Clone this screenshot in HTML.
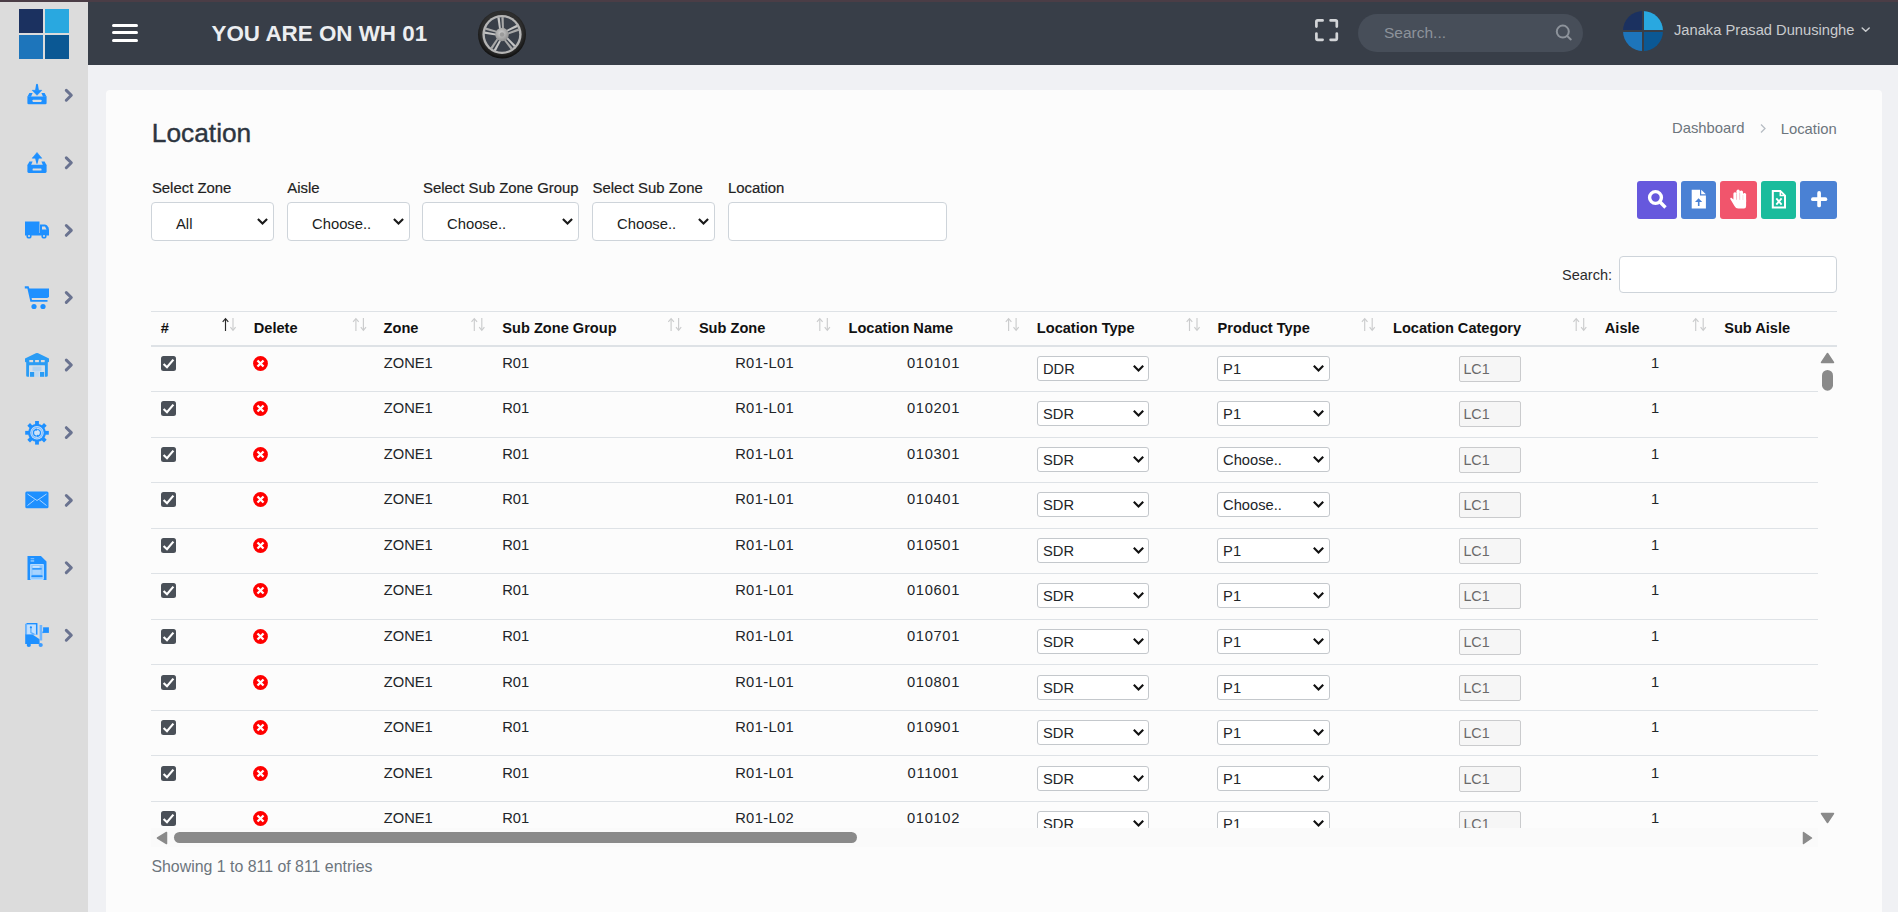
<!DOCTYPE html><html><head><meta charset="utf-8"><style>
html,body{margin:0;padding:0;}
body{width:1898px;height:912px;overflow:hidden;position:relative;background:#f0f1f4;font-family:'Liberation Sans',sans-serif;}
.t{position:absolute;white-space:nowrap;}
.s{-webkit-text-stroke-width:0.2px;}
.b{position:absolute;}
</style></head><body>
<div class="b" style="left:0px;top:0px;width:88px;height:912px;background:#dcdcdc;"></div>
<div class="b" style="left:88px;top:0px;width:1810px;height:65px;background:#383e48;"></div>
<div class="b" style="left:0px;top:0px;width:1898px;height:2px;background:#4b3d46;"></div>
<div class="b" style="left:19px;top:9px;width:24px;height:24px;background:#1b3160;"></div>
<div class="b" style="left:45px;top:9px;width:24px;height:24px;background:#29a8e0;"></div>
<div class="b" style="left:19px;top:35px;width:24px;height:24px;background:#1d75bb;"></div>
<div class="b" style="left:45px;top:35px;width:24px;height:24px;background:#0b5894;"></div>
<div class="b" style="left:112px;top:24px;width:26px;height:3px;background:#fff;border-radius:2px;"></div>
<div class="b" style="left:112px;top:31px;width:26px;height:3px;background:#fff;border-radius:2px;"></div>
<div class="b" style="left:112px;top:39px;width:26px;height:3px;background:#fff;border-radius:2px;"></div>
<div class="t" style="left:211.50px;top:23.14px;font-size:22.4px;line-height:22.4px;color:#eceef1;font-weight:700;-webkit-text-stroke-width:0;">YOU ARE ON WH 01</div>
<svg class="b" style="left:477px;top:10px" width="50" height="50" viewBox="0 0 50 50"><defs><radialGradient id="tg" cx="50%" cy="45%" r="55%"><stop offset="78%" stop-color="#2e2e2e"/><stop offset="100%" stop-color="#0e0e0e"/></radialGradient>
<radialGradient id="hg" cx="45%" cy="40%" r="60%"><stop offset="0%" stop-color="#cfcfcf"/><stop offset="100%" stop-color="#8e8e8e"/></radialGradient></defs>
<circle cx="25" cy="24.5" r="24" fill="url(#tg)"/><circle cx="25" cy="24.5" r="19.6" fill="#b5b5b5"/><circle cx="25" cy="24.5" r="17.2" fill="#393f49"/>
<g transform="rotate(-5 25 24.5)"><path d="M22.6 19 L21.8 7.2 H24.2 L24.4 19 Z" fill="#c4c4c4"/><path d="M27.4 19 L28.2 7.2 H25.8 L25.6 19 Z" fill="#a8a8a8"/></g><g transform="rotate(67 25 24.5)"><path d="M22.6 19 L21.8 7.2 H24.2 L24.4 19 Z" fill="#c4c4c4"/><path d="M27.4 19 L28.2 7.2 H25.8 L25.6 19 Z" fill="#a8a8a8"/></g><g transform="rotate(139 25 24.5)"><path d="M22.6 19 L21.8 7.2 H24.2 L24.4 19 Z" fill="#c4c4c4"/><path d="M27.4 19 L28.2 7.2 H25.8 L25.6 19 Z" fill="#a8a8a8"/></g><g transform="rotate(211 25 24.5)"><path d="M22.6 19 L21.8 7.2 H24.2 L24.4 19 Z" fill="#c4c4c4"/><path d="M27.4 19 L28.2 7.2 H25.8 L25.6 19 Z" fill="#a8a8a8"/></g><g transform="rotate(283 25 24.5)"><path d="M22.6 19 L21.8 7.2 H24.2 L24.4 19 Z" fill="#c4c4c4"/><path d="M27.4 19 L28.2 7.2 H25.8 L25.6 19 Z" fill="#a8a8a8"/></g><circle cx="25" cy="24.5" r="6.8" fill="url(#hg)"/><circle cx="25" cy="24.5" r="2.2" fill="#9a9a9a"/></svg>
<svg class="b" style="left:1314px;top:18px" width="26" height="26" viewBox="0 0 26 26"><g fill="none" stroke="#d3d5d8" stroke-width="2.7" stroke-linecap="round" stroke-linejoin="round">
<path d="M2.4 8.6 V3.6 Q2.4 2.4 3.6 2.4 H8.6"/><path d="M16.6 2.4 H21.6 Q22.8 2.4 22.8 3.6 V8.6"/><path d="M22.8 15.6 V20.6 Q22.8 21.8 21.6 21.8 H16.6"/><path d="M8.6 21.8 H3.6 Q2.4 21.8 2.4 20.6 V15.6"/></g></svg>
<div class="b" style="left:1358px;top:14px;width:225px;height:38px;background:#474e59;border-radius:19px;"></div>
<div class="t" style="left:1384.00px;top:25.08px;font-size:15.5px;line-height:15.5px;color:#8d939b;font-weight:400;">Search...</div>
<svg class="b" style="left:1553px;top:22px" width="22" height="22" viewBox="0 0 22 22"><g fill="none" stroke="#8d939b" stroke-width="2" stroke-linecap="round"><circle cx="9.8" cy="9.6" r="6"/><line x1="14.2" y1="14" x2="17.8" y2="17.4"/></g></svg>
<svg class="b" style="left:1623px;top:11px" width="40" height="40" viewBox="0 0 40 40"><defs><clipPath id="av"><circle cx="20" cy="20" r="20"/></clipPath></defs>
<g clip-path="url(#av)"><rect x="0" y="0" width="20" height="20" fill="#1b3160"/><rect x="20" y="0" width="20" height="20" fill="#29a8e0"/>
<rect x="0" y="20" width="20" height="20" fill="#1d75bb"/><rect x="20" y="20" width="20" height="20" fill="#0b5894"/>
<rect x="19" y="0" width="2" height="40" fill="#383e48"/><rect x="0" y="19" width="40" height="2" fill="#383e48"/></g></svg>
<div class="t" style="left:1674.00px;top:23.16px;font-size:14.7px;line-height:14.7px;color:#c9cbce;font-weight:400;">Janaka Prasad Dunusinghe</div>
<svg class="b" style="left:1860px;top:26px" width="11" height="8" viewBox="0 0 11 8"><path d="M2.2 2.0 L5.7 5.3 L9.2 2.0" fill="none" stroke="#c9cbce" stroke-width="1.5" stroke-linecap="round" stroke-linejoin="round"/></svg>
<div class="b" style="left:106px;top:90px;width:1776px;height:840px;background:#fcfcfc;border-radius:4px;"></div>
<div class="t" style="left:151.80px;top:120.04px;font-size:26.3px;line-height:26.3px;color:#2d3540;font-weight:400;-webkit-text-stroke:0.4px #2d3540;">Location</div>
<div class="t" style="left:1672.00px;top:121.37px;font-size:14.8px;line-height:14.8px;color:#6c757d;font-weight:400;">Dashboard</div>
<svg class="b" style="left:1758px;top:122px" width="10" height="12" viewBox="0 0 10 12"><path d="M3 2.5 L7 6.5 L3 10.5" fill="none" stroke="#b6bcc3" stroke-width="1.3"/></svg>
<div class="t" style="left:1780.70px;top:121.77px;font-size:14.8px;line-height:14.8px;color:#6c757d;font-weight:400;">Location</div>
<div class="t" style="left:151.90px;top:180.59px;font-size:14.9px;line-height:14.9px;color:#1f1f1f;font-weight:400;-webkit-text-stroke-width:0.2px;">Select Zone</div>
<div class="t" style="left:287.30px;top:180.59px;font-size:14.9px;line-height:14.9px;color:#1f1f1f;font-weight:400;-webkit-text-stroke-width:0.2px;">Aisle</div>
<div class="t" style="left:423.00px;top:180.59px;font-size:14.9px;line-height:14.9px;color:#1f1f1f;font-weight:400;-webkit-text-stroke-width:0.2px;">Select Sub Zone Group</div>
<div class="t" style="left:592.60px;top:180.59px;font-size:14.9px;line-height:14.9px;color:#1f1f1f;font-weight:400;-webkit-text-stroke-width:0.2px;">Select Sub Zone</div>
<div class="t" style="left:728.00px;top:180.59px;font-size:14.9px;line-height:14.9px;color:#1f1f1f;font-weight:400;-webkit-text-stroke-width:0.2px;">Location</div>
<div class="b" style="left:151px;top:202px;width:123px;height:39px;box-sizing:border-box;border:1px solid #ced4da;border-radius:4px;background:#fff;"></div>
<div class="t" style="left:176.00px;top:217.07px;font-size:14.8px;line-height:14.8px;color:#1a1d21;font-weight:400;">All</div>
<svg class="b" style="left:255.89999999999998px;top:217.3px" width="13" height="9" viewBox="0 0 13 9"><path d="M1.9 2.0 L6.5 6.6 L11.1 2.0" fill="none" stroke="#1a1a1a" stroke-width="2.1" stroke-linecap="butt"/></svg>
<div class="b" style="left:287px;top:202px;width:123px;height:39px;box-sizing:border-box;border:1px solid #ced4da;border-radius:4px;background:#fff;"></div>
<div class="t" style="left:312.00px;top:217.07px;font-size:14.8px;line-height:14.8px;color:#1a1d21;font-weight:400;">Choose..</div>
<svg class="b" style="left:391.9px;top:217.3px" width="13" height="9" viewBox="0 0 13 9"><path d="M1.9 2.0 L6.5 6.6 L11.1 2.0" fill="none" stroke="#1a1a1a" stroke-width="2.1" stroke-linecap="butt"/></svg>
<div class="b" style="left:422px;top:202px;width:157px;height:39px;box-sizing:border-box;border:1px solid #ced4da;border-radius:4px;background:#fff;"></div>
<div class="t" style="left:447.00px;top:217.07px;font-size:14.8px;line-height:14.8px;color:#1a1d21;font-weight:400;">Choose..</div>
<svg class="b" style="left:560.9px;top:217.3px" width="13" height="9" viewBox="0 0 13 9"><path d="M1.9 2.0 L6.5 6.6 L11.1 2.0" fill="none" stroke="#1a1a1a" stroke-width="2.1" stroke-linecap="butt"/></svg>
<div class="b" style="left:592px;top:202px;width:123px;height:39px;box-sizing:border-box;border:1px solid #ced4da;border-radius:4px;background:#fff;"></div>
<div class="t" style="left:617.00px;top:217.07px;font-size:14.8px;line-height:14.8px;color:#1a1d21;font-weight:400;">Choose..</div>
<svg class="b" style="left:696.9px;top:217.3px" width="13" height="9" viewBox="0 0 13 9"><path d="M1.9 2.0 L6.5 6.6 L11.1 2.0" fill="none" stroke="#1a1a1a" stroke-width="2.1" stroke-linecap="butt"/></svg>
<div class="b" style="left:728px;top:202px;width:219px;height:39px;box-sizing:border-box;border:1px solid #ced4da;border-radius:4px;background:#fff;"></div>
<div class="b" style="left:1637px;top:181px;width:40px;height:38px;background:#6658dd;border-radius:3px;"></div>
<div class="b" style="left:1681px;top:181px;width:35px;height:38px;background:#4a81d4;border-radius:3px;"></div>
<div class="b" style="left:1720px;top:181px;width:37px;height:38px;background:#f1556c;border-radius:3px;"></div>
<div class="b" style="left:1761px;top:181px;width:35px;height:38px;background:#1abc9c;border-radius:3px;"></div>
<div class="b" style="left:1800px;top:181px;width:37px;height:38px;background:#4a81d4;border-radius:3px;"></div>
<svg class="b" style="left:1646px;top:188px" width="22" height="22" viewBox="0 0 22 22"><g fill="none" stroke="#fff" stroke-width="3.4" stroke-linecap="butt"><circle cx="9.5" cy="9.5" r="5.9"/><line x1="13.8" y1="13.8" x2="19.5" y2="19.5"/></g></svg>
<svg class="b" style="left:1690px;top:188px" width="18" height="22" viewBox="0 0 18 22"><path d="M1.7 1.8 H10 V7.5 H15.9 V20.4 H1.7 Z" fill="#fff"/><path d="M11.2 1.8 L15.9 6.3 H11.2 Z" fill="#fff"/>
<path d="M8.6 10.3 L12.2 14 H5 Z" fill="#4a81d4"/><rect x="7.9" y="13.5" width="1.6" height="4.5" fill="#4a81d4"/></svg>
<svg class="b" style="left:1729px;top:188px" width="20" height="22" viewBox="0 0 20 22"><g fill="#fff"><rect x="4.4" y="4.2" width="3.2" height="11" rx="1.5"/><rect x="7.5" y="1.6" width="3.3" height="13" rx="1.6"/>
<rect x="10.7" y="2.6" width="3.3" height="12" rx="1.6"/><rect x="13.9" y="5" width="3.2" height="10" rx="1.5"/>
<path d="M4.4 11.5 L2.4 9.7 Q1.0 9.4 1.3 11.1 L5.3 17.8 Q6.6 20.6 9.2 20.6 H15 Q17.1 20.6 17.1 18 V11.5 Z"/></g>
<g stroke="#f1556c" stroke-width="0.35" opacity="0.6"><line x1="7.55" y1="6" x2="7.55" y2="12"/><line x1="10.75" y1="5" x2="10.75" y2="12"/><line x1="13.95" y1="7" x2="13.95" y2="12"/></g></svg>
<svg class="b" style="left:1770px;top:188px" width="18" height="22" viewBox="0 0 18 22"><path d="M2.8 2.9 H10.3 L15.0 7.6 V19.5 H2.8 Z" fill="none" stroke="#fff" stroke-width="2"/><path d="M10.3 2.9 V7.6 H15" fill="none" stroke="#fff" stroke-width="1.5"/>
<path d="M6.3 10.4 L11.6 16.6 M11.6 10.4 L6.3 16.6" stroke="#fff" stroke-width="1.9"/></svg>
<svg class="b" style="left:1809px;top:189px" width="20" height="20" viewBox="0 0 20 20"><g stroke="#fff" stroke-width="3.7" stroke-linecap="round"><line x1="10.1" y1="3.9" x2="10.1" y2="16.4"/><line x1="3.9" y1="10.15" x2="16.4" y2="10.15"/></g></svg>
<div class="t" style="left:1562.00px;top:268.03px;font-size:14.5px;line-height:14.5px;color:#2b2b2b;font-weight:400;">Search:</div>
<div class="b" style="left:1619px;top:256px;width:218px;height:37px;box-sizing:border-box;border:1px solid #ced4da;border-radius:4px;background:#fff;"></div>
<div class="b" style="left:151px;top:311px;width:1686px;height:1px;background:#dee2e6;"></div>
<div class="b" style="left:151px;top:345px;width:1686px;height:2px;background:#dee2e6;"></div>
<div class="t" style="left:160.80px;top:320.64px;font-size:14.6px;line-height:14.6px;color:#111;font-weight:700;-webkit-text-stroke-width:0;">#</div>
<svg class="b" style="left:221px;top:316px" width="16" height="17" viewBox="0 0 16 17"><g fill="none" stroke-width="1.15" stroke-linecap="butt">
<g stroke="#2a2a2a"><line x1="4.499999999999995" y1="3" x2="4.499999999999995" y2="15"/><path d="M1.6999999999999944 5.9 L4.499999999999995 2.6 L7.2999999999999945 5.9"/></g>
<g stroke="#cbcccd"><line x1="11.999999999999995" y1="2" x2="11.999999999999995" y2="14"/><path d="M9.399999999999995 11.1 L11.999999999999995 14.4 L14.599999999999994 11.1"/></g></g></svg>
<div class="t" style="left:253.80px;top:320.64px;font-size:14.6px;line-height:14.6px;color:#111;font-weight:700;-webkit-text-stroke-width:0;">Delete</div>
<svg class="b" style="left:352px;top:316px" width="16" height="17" viewBox="0 0 16 17"><g fill="none" stroke-width="1.15" stroke-linecap="butt">
<g stroke="#cbcccd"><line x1="3.9" y1="3" x2="3.9" y2="15"/><path d="M1.1 5.9 L3.9 2.6 L6.7 5.9"/></g>
<g stroke="#cbcccd"><line x1="11.4" y1="2" x2="11.4" y2="14"/><path d="M8.8 11.1 L11.4 14.4 L14.0 11.1"/></g></g></svg>
<div class="t" style="left:383.60px;top:320.64px;font-size:14.6px;line-height:14.6px;color:#111;font-weight:700;-webkit-text-stroke-width:0;">Zone</div>
<svg class="b" style="left:470px;top:316px" width="16" height="17" viewBox="0 0 16 17"><g fill="none" stroke-width="1.15" stroke-linecap="butt">
<g stroke="#cbcccd"><line x1="4.299999999999978" y1="3" x2="4.299999999999978" y2="15"/><path d="M1.4999999999999774 5.9 L4.299999999999978 2.6 L7.099999999999977 5.9"/></g>
<g stroke="#cbcccd"><line x1="11.799999999999978" y1="2" x2="11.799999999999978" y2="14"/><path d="M9.199999999999978 11.1 L11.799999999999978 14.4 L14.399999999999977 11.1"/></g></g></svg>
<div class="t" style="left:502.30px;top:320.64px;font-size:14.6px;line-height:14.6px;color:#111;font-weight:700;-webkit-text-stroke-width:0;">Sub Zone Group</div>
<svg class="b" style="left:667px;top:316px" width="16" height="17" viewBox="0 0 16 17"><g fill="none" stroke-width="1.15" stroke-linecap="butt">
<g stroke="#cbcccd"><line x1="4.100000000000046" y1="3" x2="4.100000000000046" y2="15"/><path d="M1.3000000000000456 5.9 L4.100000000000046 2.6 L6.900000000000046 5.9"/></g>
<g stroke="#cbcccd"><line x1="11.600000000000046" y1="2" x2="11.600000000000046" y2="14"/><path d="M9.000000000000046 11.1 L11.600000000000046 14.4 L14.200000000000045 11.1"/></g></g></svg>
<div class="t" style="left:698.90px;top:320.64px;font-size:14.6px;line-height:14.6px;color:#111;font-weight:700;-webkit-text-stroke-width:0;">Sub Zone</div>
<svg class="b" style="left:815px;top:316px" width="16" height="17" viewBox="0 0 16 17"><g fill="none" stroke-width="1.15" stroke-linecap="butt">
<g stroke="#cbcccd"><line x1="4.799999999999978" y1="3" x2="4.799999999999978" y2="15"/><path d="M1.9999999999999774 5.9 L4.799999999999978 2.6 L7.599999999999977 5.9"/></g>
<g stroke="#cbcccd"><line x1="12.299999999999978" y1="2" x2="12.299999999999978" y2="14"/><path d="M9.699999999999978 11.1 L12.299999999999978 14.4 L14.899999999999977 11.1"/></g></g></svg>
<div class="t" style="left:848.50px;top:320.64px;font-size:14.6px;line-height:14.6px;color:#111;font-weight:700;-webkit-text-stroke-width:0;">Location Name</div>
<svg class="b" style="left:1004px;top:316px" width="16" height="17" viewBox="0 0 16 17"><g fill="none" stroke-width="1.15" stroke-linecap="butt">
<g stroke="#cbcccd"><line x1="4.600000000000046" y1="3" x2="4.600000000000046" y2="15"/><path d="M1.8000000000000456 5.9 L4.600000000000046 2.6 L7.400000000000046 5.9"/></g>
<g stroke="#cbcccd"><line x1="12.100000000000046" y1="2" x2="12.100000000000046" y2="14"/><path d="M9.500000000000046 11.1 L12.100000000000046 14.4 L14.700000000000045 11.1"/></g></g></svg>
<div class="t" style="left:1036.80px;top:320.64px;font-size:14.6px;line-height:14.6px;color:#111;font-weight:700;-webkit-text-stroke-width:0;">Location Type</div>
<svg class="b" style="left:1185px;top:316px" width="16" height="17" viewBox="0 0 16 17"><g fill="none" stroke-width="1.15" stroke-linecap="butt">
<g stroke="#cbcccd"><line x1="4.499999999999909" y1="3" x2="4.499999999999909" y2="15"/><path d="M1.6999999999999091 5.9 L4.499999999999909 2.6 L7.299999999999909 5.9"/></g>
<g stroke="#cbcccd"><line x1="11.99999999999991" y1="2" x2="11.99999999999991" y2="14"/><path d="M9.39999999999991 11.1 L11.99999999999991 14.4 L14.599999999999909 11.1"/></g></g></svg>
<div class="t" style="left:1217.60px;top:320.64px;font-size:14.6px;line-height:14.6px;color:#111;font-weight:700;-webkit-text-stroke-width:0;">Product Type</div>
<svg class="b" style="left:1360px;top:316px" width="16" height="17" viewBox="0 0 16 17"><g fill="none" stroke-width="1.15" stroke-linecap="butt">
<g stroke="#cbcccd"><line x1="4.699999999999955" y1="3" x2="4.699999999999955" y2="15"/><path d="M1.8999999999999546 5.9 L4.699999999999955 2.6 L7.499999999999955 5.9"/></g>
<g stroke="#cbcccd"><line x1="12.199999999999955" y1="2" x2="12.199999999999955" y2="14"/><path d="M9.599999999999955 11.1 L12.199999999999955 14.4 L14.799999999999955 11.1"/></g></g></svg>
<div class="t" style="left:1393.00px;top:320.64px;font-size:14.6px;line-height:14.6px;color:#111;font-weight:700;-webkit-text-stroke-width:0;">Location Category</div>
<svg class="b" style="left:1572px;top:316px" width="16" height="17" viewBox="0 0 16 17"><g fill="none" stroke-width="1.15" stroke-linecap="butt">
<g stroke="#cbcccd"><line x1="4.199999999999955" y1="3" x2="4.199999999999955" y2="15"/><path d="M1.3999999999999546 5.9 L4.199999999999955 2.6 L6.999999999999955 5.9"/></g>
<g stroke="#cbcccd"><line x1="11.699999999999955" y1="2" x2="11.699999999999955" y2="14"/><path d="M9.099999999999955 11.1 L11.699999999999955 14.4 L14.299999999999955 11.1"/></g></g></svg>
<div class="t" style="left:1604.80px;top:320.64px;font-size:14.6px;line-height:14.6px;color:#111;font-weight:700;-webkit-text-stroke-width:0;">Aisle</div>
<svg class="b" style="left:1691px;top:316px" width="16" height="17" viewBox="0 0 16 17"><g fill="none" stroke-width="1.15" stroke-linecap="butt">
<g stroke="#cbcccd"><line x1="4.699999999999955" y1="3" x2="4.699999999999955" y2="15"/><path d="M1.8999999999999546 5.9 L4.699999999999955 2.6 L7.499999999999955 5.9"/></g>
<g stroke="#cbcccd"><line x1="12.199999999999955" y1="2" x2="12.199999999999955" y2="14"/><path d="M9.599999999999955 11.1 L12.199999999999955 14.4 L14.799999999999955 11.1"/></g></g></svg>
<div class="t" style="left:1724.20px;top:320.64px;font-size:14.6px;line-height:14.6px;color:#111;font-weight:700;-webkit-text-stroke-width:0;">Sub Aisle</div>
<div class="b" style="left:151px;top:347px;width:1667px;height:481px;overflow:hidden;">
<div class="b" style="left:9.7px;top:9.00px;width:15px;height:15px;background:#4a5058;border-radius:2.5px;"></div>
<svg class="b" style="left:9.7px;top:9.00px" width="15" height="15"><path d="M2.6 8.0 L6.0 11.2 L12.4 3.6" fill="none" stroke="#fff" stroke-width="2.2"/></svg>
<svg class="b" style="left:102.2px;top:9.00px" width="15" height="15"><circle cx="7.5" cy="7.5" r="7.4" fill="#ff0000"/><path d="M4.5 4.5 L10.5 10.5 M10.5 4.5 L4.5 10.5" stroke="#fff" stroke-width="2.3"/></svg>
<div class="t" style="left:232.80px;top:8.76px;font-size:14.7px;line-height:14.7px;color:#212529;">ZONE1</div>
<div class="t" style="left:351.20px;top:8.76px;font-size:14.7px;line-height:14.7px;color:#212529;">R01</div>
<div class="t" style="left:543.57px;width:140px;text-align:center;top:8.76px;font-size:14.7px;line-height:14.7px;color:#212529;letter-spacing:0.35px;">R01-L01</div>
<div class="t" style="left:712.53px;width:140px;text-align:center;top:8.76px;font-size:14.7px;line-height:14.7px;color:#212529;letter-spacing:0.65px;">010101</div>
<div class="t" style="left:1434.20px;width:140px;text-align:center;top:8.76px;font-size:14.7px;line-height:14.7px;color:#212529;letter-spacing:0px;">1</div>
<div class="b" style="left:886.2px;top:9.40px;width:112px;height:24.5px;box-sizing:border-box;border:1px solid #c4c8cc;border-radius:3px;background:#fff;"></div>
<div class="t" style="left:892.00px;top:14.56px;font-size:14.7px;line-height:14.7px;color:#212529;">DDR</div>
<svg class="b" style="left:980.7px;top:17.00px" width="13" height="9"><path d="M1.8 1.8 L6.5 6.6 L11.2 1.8" fill="none" stroke="#111" stroke-width="2.1"/></svg>
<div class="b" style="left:1066.3px;top:9.40px;width:112.5px;height:24.5px;box-sizing:border-box;border:1px solid #c4c8cc;border-radius:3px;background:#fff;"></div>
<div class="t" style="left:1072.10px;top:14.56px;font-size:14.7px;line-height:14.7px;color:#212529;">P1</div>
<svg class="b" style="left:1160.8px;top:17.00px" width="13" height="9"><path d="M1.8 1.8 L6.5 6.6 L11.2 1.8" fill="none" stroke="#111" stroke-width="2.1"/></svg>
<div class="b" style="left:1308.4px;top:9.00px;width:61.3px;height:26px;box-sizing:border-box;border:1px solid #cacbcd;border-radius:2px;background:#f6f6f6;"></div>
<div class="t" style="left:1312.40px;top:15.10px;font-size:14.3px;line-height:14.3px;color:#6a6a6a;">LC1</div>
<div class="b" style="left:0px;top:44px;width:1667px;height:1px;background:#dee2e6;"></div>
<div class="b" style="left:9.7px;top:54.00px;width:15px;height:15px;background:#4a5058;border-radius:2.5px;"></div>
<svg class="b" style="left:9.7px;top:54.00px" width="15" height="15"><path d="M2.6 8.0 L6.0 11.2 L12.4 3.6" fill="none" stroke="#fff" stroke-width="2.2"/></svg>
<svg class="b" style="left:102.2px;top:54.00px" width="15" height="15"><circle cx="7.5" cy="7.5" r="7.4" fill="#ff0000"/><path d="M4.5 4.5 L10.5 10.5 M10.5 4.5 L4.5 10.5" stroke="#fff" stroke-width="2.3"/></svg>
<div class="t" style="left:232.80px;top:53.76px;font-size:14.7px;line-height:14.7px;color:#212529;">ZONE1</div>
<div class="t" style="left:351.20px;top:53.76px;font-size:14.7px;line-height:14.7px;color:#212529;">R01</div>
<div class="t" style="left:543.57px;width:140px;text-align:center;top:53.76px;font-size:14.7px;line-height:14.7px;color:#212529;letter-spacing:0.35px;">R01-L01</div>
<div class="t" style="left:712.53px;width:140px;text-align:center;top:53.76px;font-size:14.7px;line-height:14.7px;color:#212529;letter-spacing:0.65px;">010201</div>
<div class="t" style="left:1434.20px;width:140px;text-align:center;top:53.76px;font-size:14.7px;line-height:14.7px;color:#212529;letter-spacing:0px;">1</div>
<div class="b" style="left:886.2px;top:54.40px;width:112px;height:24.5px;box-sizing:border-box;border:1px solid #c4c8cc;border-radius:3px;background:#fff;"></div>
<div class="t" style="left:892.00px;top:59.56px;font-size:14.7px;line-height:14.7px;color:#212529;">SDR</div>
<svg class="b" style="left:980.7px;top:62.00px" width="13" height="9"><path d="M1.8 1.8 L6.5 6.6 L11.2 1.8" fill="none" stroke="#111" stroke-width="2.1"/></svg>
<div class="b" style="left:1066.3px;top:54.40px;width:112.5px;height:24.5px;box-sizing:border-box;border:1px solid #c4c8cc;border-radius:3px;background:#fff;"></div>
<div class="t" style="left:1072.10px;top:59.56px;font-size:14.7px;line-height:14.7px;color:#212529;">P1</div>
<svg class="b" style="left:1160.8px;top:62.00px" width="13" height="9"><path d="M1.8 1.8 L6.5 6.6 L11.2 1.8" fill="none" stroke="#111" stroke-width="2.1"/></svg>
<div class="b" style="left:1308.4px;top:54.00px;width:61.3px;height:26px;box-sizing:border-box;border:1px solid #cacbcd;border-radius:2px;background:#f6f6f6;"></div>
<div class="t" style="left:1312.40px;top:60.10px;font-size:14.3px;line-height:14.3px;color:#6a6a6a;">LC1</div>
<div class="b" style="left:0px;top:90px;width:1667px;height:1px;background:#dee2e6;"></div>
<div class="b" style="left:9.7px;top:100.00px;width:15px;height:15px;background:#4a5058;border-radius:2.5px;"></div>
<svg class="b" style="left:9.7px;top:100.00px" width="15" height="15"><path d="M2.6 8.0 L6.0 11.2 L12.4 3.6" fill="none" stroke="#fff" stroke-width="2.2"/></svg>
<svg class="b" style="left:102.2px;top:100.00px" width="15" height="15"><circle cx="7.5" cy="7.5" r="7.4" fill="#ff0000"/><path d="M4.5 4.5 L10.5 10.5 M10.5 4.5 L4.5 10.5" stroke="#fff" stroke-width="2.3"/></svg>
<div class="t" style="left:232.80px;top:99.76px;font-size:14.7px;line-height:14.7px;color:#212529;">ZONE1</div>
<div class="t" style="left:351.20px;top:99.76px;font-size:14.7px;line-height:14.7px;color:#212529;">R01</div>
<div class="t" style="left:543.57px;width:140px;text-align:center;top:99.76px;font-size:14.7px;line-height:14.7px;color:#212529;letter-spacing:0.35px;">R01-L01</div>
<div class="t" style="left:712.53px;width:140px;text-align:center;top:99.76px;font-size:14.7px;line-height:14.7px;color:#212529;letter-spacing:0.65px;">010301</div>
<div class="t" style="left:1434.20px;width:140px;text-align:center;top:99.76px;font-size:14.7px;line-height:14.7px;color:#212529;letter-spacing:0px;">1</div>
<div class="b" style="left:886.2px;top:100.40px;width:112px;height:24.5px;box-sizing:border-box;border:1px solid #c4c8cc;border-radius:3px;background:#fff;"></div>
<div class="t" style="left:892.00px;top:105.56px;font-size:14.7px;line-height:14.7px;color:#212529;">SDR</div>
<svg class="b" style="left:980.7px;top:108.00px" width="13" height="9"><path d="M1.8 1.8 L6.5 6.6 L11.2 1.8" fill="none" stroke="#111" stroke-width="2.1"/></svg>
<div class="b" style="left:1066.3px;top:100.40px;width:112.5px;height:24.5px;box-sizing:border-box;border:1px solid #c4c8cc;border-radius:3px;background:#fff;"></div>
<div class="t" style="left:1072.10px;top:105.56px;font-size:14.7px;line-height:14.7px;color:#212529;">Choose..</div>
<svg class="b" style="left:1160.8px;top:108.00px" width="13" height="9"><path d="M1.8 1.8 L6.5 6.6 L11.2 1.8" fill="none" stroke="#111" stroke-width="2.1"/></svg>
<div class="b" style="left:1308.4px;top:100.00px;width:61.3px;height:26px;box-sizing:border-box;border:1px solid #cacbcd;border-radius:2px;background:#f6f6f6;"></div>
<div class="t" style="left:1312.40px;top:106.10px;font-size:14.3px;line-height:14.3px;color:#6a6a6a;">LC1</div>
<div class="b" style="left:0px;top:135px;width:1667px;height:1px;background:#dee2e6;"></div>
<div class="b" style="left:9.7px;top:145.00px;width:15px;height:15px;background:#4a5058;border-radius:2.5px;"></div>
<svg class="b" style="left:9.7px;top:145.00px" width="15" height="15"><path d="M2.6 8.0 L6.0 11.2 L12.4 3.6" fill="none" stroke="#fff" stroke-width="2.2"/></svg>
<svg class="b" style="left:102.2px;top:145.00px" width="15" height="15"><circle cx="7.5" cy="7.5" r="7.4" fill="#ff0000"/><path d="M4.5 4.5 L10.5 10.5 M10.5 4.5 L4.5 10.5" stroke="#fff" stroke-width="2.3"/></svg>
<div class="t" style="left:232.80px;top:144.76px;font-size:14.7px;line-height:14.7px;color:#212529;">ZONE1</div>
<div class="t" style="left:351.20px;top:144.76px;font-size:14.7px;line-height:14.7px;color:#212529;">R01</div>
<div class="t" style="left:543.57px;width:140px;text-align:center;top:144.76px;font-size:14.7px;line-height:14.7px;color:#212529;letter-spacing:0.35px;">R01-L01</div>
<div class="t" style="left:712.53px;width:140px;text-align:center;top:144.76px;font-size:14.7px;line-height:14.7px;color:#212529;letter-spacing:0.65px;">010401</div>
<div class="t" style="left:1434.20px;width:140px;text-align:center;top:144.76px;font-size:14.7px;line-height:14.7px;color:#212529;letter-spacing:0px;">1</div>
<div class="b" style="left:886.2px;top:145.40px;width:112px;height:24.5px;box-sizing:border-box;border:1px solid #c4c8cc;border-radius:3px;background:#fff;"></div>
<div class="t" style="left:892.00px;top:150.56px;font-size:14.7px;line-height:14.7px;color:#212529;">SDR</div>
<svg class="b" style="left:980.7px;top:153.00px" width="13" height="9"><path d="M1.8 1.8 L6.5 6.6 L11.2 1.8" fill="none" stroke="#111" stroke-width="2.1"/></svg>
<div class="b" style="left:1066.3px;top:145.40px;width:112.5px;height:24.5px;box-sizing:border-box;border:1px solid #c4c8cc;border-radius:3px;background:#fff;"></div>
<div class="t" style="left:1072.10px;top:150.56px;font-size:14.7px;line-height:14.7px;color:#212529;">Choose..</div>
<svg class="b" style="left:1160.8px;top:153.00px" width="13" height="9"><path d="M1.8 1.8 L6.5 6.6 L11.2 1.8" fill="none" stroke="#111" stroke-width="2.1"/></svg>
<div class="b" style="left:1308.4px;top:145.00px;width:61.3px;height:26px;box-sizing:border-box;border:1px solid #cacbcd;border-radius:2px;background:#f6f6f6;"></div>
<div class="t" style="left:1312.40px;top:151.10px;font-size:14.3px;line-height:14.3px;color:#6a6a6a;">LC1</div>
<div class="b" style="left:0px;top:181px;width:1667px;height:1px;background:#dee2e6;"></div>
<div class="b" style="left:9.7px;top:191.00px;width:15px;height:15px;background:#4a5058;border-radius:2.5px;"></div>
<svg class="b" style="left:9.7px;top:191.00px" width="15" height="15"><path d="M2.6 8.0 L6.0 11.2 L12.4 3.6" fill="none" stroke="#fff" stroke-width="2.2"/></svg>
<svg class="b" style="left:102.2px;top:191.00px" width="15" height="15"><circle cx="7.5" cy="7.5" r="7.4" fill="#ff0000"/><path d="M4.5 4.5 L10.5 10.5 M10.5 4.5 L4.5 10.5" stroke="#fff" stroke-width="2.3"/></svg>
<div class="t" style="left:232.80px;top:190.76px;font-size:14.7px;line-height:14.7px;color:#212529;">ZONE1</div>
<div class="t" style="left:351.20px;top:190.76px;font-size:14.7px;line-height:14.7px;color:#212529;">R01</div>
<div class="t" style="left:543.57px;width:140px;text-align:center;top:190.76px;font-size:14.7px;line-height:14.7px;color:#212529;letter-spacing:0.35px;">R01-L01</div>
<div class="t" style="left:712.53px;width:140px;text-align:center;top:190.76px;font-size:14.7px;line-height:14.7px;color:#212529;letter-spacing:0.65px;">010501</div>
<div class="t" style="left:1434.20px;width:140px;text-align:center;top:190.76px;font-size:14.7px;line-height:14.7px;color:#212529;letter-spacing:0px;">1</div>
<div class="b" style="left:886.2px;top:191.40px;width:112px;height:24.5px;box-sizing:border-box;border:1px solid #c4c8cc;border-radius:3px;background:#fff;"></div>
<div class="t" style="left:892.00px;top:196.56px;font-size:14.7px;line-height:14.7px;color:#212529;">SDR</div>
<svg class="b" style="left:980.7px;top:199.00px" width="13" height="9"><path d="M1.8 1.8 L6.5 6.6 L11.2 1.8" fill="none" stroke="#111" stroke-width="2.1"/></svg>
<div class="b" style="left:1066.3px;top:191.40px;width:112.5px;height:24.5px;box-sizing:border-box;border:1px solid #c4c8cc;border-radius:3px;background:#fff;"></div>
<div class="t" style="left:1072.10px;top:196.56px;font-size:14.7px;line-height:14.7px;color:#212529;">P1</div>
<svg class="b" style="left:1160.8px;top:199.00px" width="13" height="9"><path d="M1.8 1.8 L6.5 6.6 L11.2 1.8" fill="none" stroke="#111" stroke-width="2.1"/></svg>
<div class="b" style="left:1308.4px;top:191.00px;width:61.3px;height:26px;box-sizing:border-box;border:1px solid #cacbcd;border-radius:2px;background:#f6f6f6;"></div>
<div class="t" style="left:1312.40px;top:197.10px;font-size:14.3px;line-height:14.3px;color:#6a6a6a;">LC1</div>
<div class="b" style="left:0px;top:226px;width:1667px;height:1px;background:#dee2e6;"></div>
<div class="b" style="left:9.7px;top:236.00px;width:15px;height:15px;background:#4a5058;border-radius:2.5px;"></div>
<svg class="b" style="left:9.7px;top:236.00px" width="15" height="15"><path d="M2.6 8.0 L6.0 11.2 L12.4 3.6" fill="none" stroke="#fff" stroke-width="2.2"/></svg>
<svg class="b" style="left:102.2px;top:236.00px" width="15" height="15"><circle cx="7.5" cy="7.5" r="7.4" fill="#ff0000"/><path d="M4.5 4.5 L10.5 10.5 M10.5 4.5 L4.5 10.5" stroke="#fff" stroke-width="2.3"/></svg>
<div class="t" style="left:232.80px;top:235.76px;font-size:14.7px;line-height:14.7px;color:#212529;">ZONE1</div>
<div class="t" style="left:351.20px;top:235.76px;font-size:14.7px;line-height:14.7px;color:#212529;">R01</div>
<div class="t" style="left:543.57px;width:140px;text-align:center;top:235.76px;font-size:14.7px;line-height:14.7px;color:#212529;letter-spacing:0.35px;">R01-L01</div>
<div class="t" style="left:712.53px;width:140px;text-align:center;top:235.76px;font-size:14.7px;line-height:14.7px;color:#212529;letter-spacing:0.65px;">010601</div>
<div class="t" style="left:1434.20px;width:140px;text-align:center;top:235.76px;font-size:14.7px;line-height:14.7px;color:#212529;letter-spacing:0px;">1</div>
<div class="b" style="left:886.2px;top:236.40px;width:112px;height:24.5px;box-sizing:border-box;border:1px solid #c4c8cc;border-radius:3px;background:#fff;"></div>
<div class="t" style="left:892.00px;top:241.56px;font-size:14.7px;line-height:14.7px;color:#212529;">SDR</div>
<svg class="b" style="left:980.7px;top:244.00px" width="13" height="9"><path d="M1.8 1.8 L6.5 6.6 L11.2 1.8" fill="none" stroke="#111" stroke-width="2.1"/></svg>
<div class="b" style="left:1066.3px;top:236.40px;width:112.5px;height:24.5px;box-sizing:border-box;border:1px solid #c4c8cc;border-radius:3px;background:#fff;"></div>
<div class="t" style="left:1072.10px;top:241.56px;font-size:14.7px;line-height:14.7px;color:#212529;">P1</div>
<svg class="b" style="left:1160.8px;top:244.00px" width="13" height="9"><path d="M1.8 1.8 L6.5 6.6 L11.2 1.8" fill="none" stroke="#111" stroke-width="2.1"/></svg>
<div class="b" style="left:1308.4px;top:236.00px;width:61.3px;height:26px;box-sizing:border-box;border:1px solid #cacbcd;border-radius:2px;background:#f6f6f6;"></div>
<div class="t" style="left:1312.40px;top:242.10px;font-size:14.3px;line-height:14.3px;color:#6a6a6a;">LC1</div>
<div class="b" style="left:0px;top:272px;width:1667px;height:1px;background:#dee2e6;"></div>
<div class="b" style="left:9.7px;top:282.00px;width:15px;height:15px;background:#4a5058;border-radius:2.5px;"></div>
<svg class="b" style="left:9.7px;top:282.00px" width="15" height="15"><path d="M2.6 8.0 L6.0 11.2 L12.4 3.6" fill="none" stroke="#fff" stroke-width="2.2"/></svg>
<svg class="b" style="left:102.2px;top:282.00px" width="15" height="15"><circle cx="7.5" cy="7.5" r="7.4" fill="#ff0000"/><path d="M4.5 4.5 L10.5 10.5 M10.5 4.5 L4.5 10.5" stroke="#fff" stroke-width="2.3"/></svg>
<div class="t" style="left:232.80px;top:281.76px;font-size:14.7px;line-height:14.7px;color:#212529;">ZONE1</div>
<div class="t" style="left:351.20px;top:281.76px;font-size:14.7px;line-height:14.7px;color:#212529;">R01</div>
<div class="t" style="left:543.57px;width:140px;text-align:center;top:281.76px;font-size:14.7px;line-height:14.7px;color:#212529;letter-spacing:0.35px;">R01-L01</div>
<div class="t" style="left:712.53px;width:140px;text-align:center;top:281.76px;font-size:14.7px;line-height:14.7px;color:#212529;letter-spacing:0.65px;">010701</div>
<div class="t" style="left:1434.20px;width:140px;text-align:center;top:281.76px;font-size:14.7px;line-height:14.7px;color:#212529;letter-spacing:0px;">1</div>
<div class="b" style="left:886.2px;top:282.40px;width:112px;height:24.5px;box-sizing:border-box;border:1px solid #c4c8cc;border-radius:3px;background:#fff;"></div>
<div class="t" style="left:892.00px;top:287.56px;font-size:14.7px;line-height:14.7px;color:#212529;">SDR</div>
<svg class="b" style="left:980.7px;top:290.00px" width="13" height="9"><path d="M1.8 1.8 L6.5 6.6 L11.2 1.8" fill="none" stroke="#111" stroke-width="2.1"/></svg>
<div class="b" style="left:1066.3px;top:282.40px;width:112.5px;height:24.5px;box-sizing:border-box;border:1px solid #c4c8cc;border-radius:3px;background:#fff;"></div>
<div class="t" style="left:1072.10px;top:287.56px;font-size:14.7px;line-height:14.7px;color:#212529;">P1</div>
<svg class="b" style="left:1160.8px;top:290.00px" width="13" height="9"><path d="M1.8 1.8 L6.5 6.6 L11.2 1.8" fill="none" stroke="#111" stroke-width="2.1"/></svg>
<div class="b" style="left:1308.4px;top:282.00px;width:61.3px;height:26px;box-sizing:border-box;border:1px solid #cacbcd;border-radius:2px;background:#f6f6f6;"></div>
<div class="t" style="left:1312.40px;top:288.10px;font-size:14.3px;line-height:14.3px;color:#6a6a6a;">LC1</div>
<div class="b" style="left:0px;top:317px;width:1667px;height:1px;background:#dee2e6;"></div>
<div class="b" style="left:9.7px;top:328.00px;width:15px;height:15px;background:#4a5058;border-radius:2.5px;"></div>
<svg class="b" style="left:9.7px;top:328.00px" width="15" height="15"><path d="M2.6 8.0 L6.0 11.2 L12.4 3.6" fill="none" stroke="#fff" stroke-width="2.2"/></svg>
<svg class="b" style="left:102.2px;top:328.00px" width="15" height="15"><circle cx="7.5" cy="7.5" r="7.4" fill="#ff0000"/><path d="M4.5 4.5 L10.5 10.5 M10.5 4.5 L4.5 10.5" stroke="#fff" stroke-width="2.3"/></svg>
<div class="t" style="left:232.80px;top:327.76px;font-size:14.7px;line-height:14.7px;color:#212529;">ZONE1</div>
<div class="t" style="left:351.20px;top:327.76px;font-size:14.7px;line-height:14.7px;color:#212529;">R01</div>
<div class="t" style="left:543.57px;width:140px;text-align:center;top:327.76px;font-size:14.7px;line-height:14.7px;color:#212529;letter-spacing:0.35px;">R01-L01</div>
<div class="t" style="left:712.53px;width:140px;text-align:center;top:327.76px;font-size:14.7px;line-height:14.7px;color:#212529;letter-spacing:0.65px;">010801</div>
<div class="t" style="left:1434.20px;width:140px;text-align:center;top:327.76px;font-size:14.7px;line-height:14.7px;color:#212529;letter-spacing:0px;">1</div>
<div class="b" style="left:886.2px;top:328.40px;width:112px;height:24.5px;box-sizing:border-box;border:1px solid #c4c8cc;border-radius:3px;background:#fff;"></div>
<div class="t" style="left:892.00px;top:333.56px;font-size:14.7px;line-height:14.7px;color:#212529;">SDR</div>
<svg class="b" style="left:980.7px;top:336.00px" width="13" height="9"><path d="M1.8 1.8 L6.5 6.6 L11.2 1.8" fill="none" stroke="#111" stroke-width="2.1"/></svg>
<div class="b" style="left:1066.3px;top:328.40px;width:112.5px;height:24.5px;box-sizing:border-box;border:1px solid #c4c8cc;border-radius:3px;background:#fff;"></div>
<div class="t" style="left:1072.10px;top:333.56px;font-size:14.7px;line-height:14.7px;color:#212529;">P1</div>
<svg class="b" style="left:1160.8px;top:336.00px" width="13" height="9"><path d="M1.8 1.8 L6.5 6.6 L11.2 1.8" fill="none" stroke="#111" stroke-width="2.1"/></svg>
<div class="b" style="left:1308.4px;top:328.00px;width:61.3px;height:26px;box-sizing:border-box;border:1px solid #cacbcd;border-radius:2px;background:#f6f6f6;"></div>
<div class="t" style="left:1312.40px;top:334.10px;font-size:14.3px;line-height:14.3px;color:#6a6a6a;">LC1</div>
<div class="b" style="left:0px;top:363px;width:1667px;height:1px;background:#dee2e6;"></div>
<div class="b" style="left:9.7px;top:373.00px;width:15px;height:15px;background:#4a5058;border-radius:2.5px;"></div>
<svg class="b" style="left:9.7px;top:373.00px" width="15" height="15"><path d="M2.6 8.0 L6.0 11.2 L12.4 3.6" fill="none" stroke="#fff" stroke-width="2.2"/></svg>
<svg class="b" style="left:102.2px;top:373.00px" width="15" height="15"><circle cx="7.5" cy="7.5" r="7.4" fill="#ff0000"/><path d="M4.5 4.5 L10.5 10.5 M10.5 4.5 L4.5 10.5" stroke="#fff" stroke-width="2.3"/></svg>
<div class="t" style="left:232.80px;top:372.76px;font-size:14.7px;line-height:14.7px;color:#212529;">ZONE1</div>
<div class="t" style="left:351.20px;top:372.76px;font-size:14.7px;line-height:14.7px;color:#212529;">R01</div>
<div class="t" style="left:543.57px;width:140px;text-align:center;top:372.76px;font-size:14.7px;line-height:14.7px;color:#212529;letter-spacing:0.35px;">R01-L01</div>
<div class="t" style="left:712.53px;width:140px;text-align:center;top:372.76px;font-size:14.7px;line-height:14.7px;color:#212529;letter-spacing:0.65px;">010901</div>
<div class="t" style="left:1434.20px;width:140px;text-align:center;top:372.76px;font-size:14.7px;line-height:14.7px;color:#212529;letter-spacing:0px;">1</div>
<div class="b" style="left:886.2px;top:373.40px;width:112px;height:24.5px;box-sizing:border-box;border:1px solid #c4c8cc;border-radius:3px;background:#fff;"></div>
<div class="t" style="left:892.00px;top:378.56px;font-size:14.7px;line-height:14.7px;color:#212529;">SDR</div>
<svg class="b" style="left:980.7px;top:381.00px" width="13" height="9"><path d="M1.8 1.8 L6.5 6.6 L11.2 1.8" fill="none" stroke="#111" stroke-width="2.1"/></svg>
<div class="b" style="left:1066.3px;top:373.40px;width:112.5px;height:24.5px;box-sizing:border-box;border:1px solid #c4c8cc;border-radius:3px;background:#fff;"></div>
<div class="t" style="left:1072.10px;top:378.56px;font-size:14.7px;line-height:14.7px;color:#212529;">P1</div>
<svg class="b" style="left:1160.8px;top:381.00px" width="13" height="9"><path d="M1.8 1.8 L6.5 6.6 L11.2 1.8" fill="none" stroke="#111" stroke-width="2.1"/></svg>
<div class="b" style="left:1308.4px;top:373.00px;width:61.3px;height:26px;box-sizing:border-box;border:1px solid #cacbcd;border-radius:2px;background:#f6f6f6;"></div>
<div class="t" style="left:1312.40px;top:379.10px;font-size:14.3px;line-height:14.3px;color:#6a6a6a;">LC1</div>
<div class="b" style="left:0px;top:408px;width:1667px;height:1px;background:#dee2e6;"></div>
<div class="b" style="left:9.7px;top:419.00px;width:15px;height:15px;background:#4a5058;border-radius:2.5px;"></div>
<svg class="b" style="left:9.7px;top:419.00px" width="15" height="15"><path d="M2.6 8.0 L6.0 11.2 L12.4 3.6" fill="none" stroke="#fff" stroke-width="2.2"/></svg>
<svg class="b" style="left:102.2px;top:419.00px" width="15" height="15"><circle cx="7.5" cy="7.5" r="7.4" fill="#ff0000"/><path d="M4.5 4.5 L10.5 10.5 M10.5 4.5 L4.5 10.5" stroke="#fff" stroke-width="2.3"/></svg>
<div class="t" style="left:232.80px;top:418.76px;font-size:14.7px;line-height:14.7px;color:#212529;">ZONE1</div>
<div class="t" style="left:351.20px;top:418.76px;font-size:14.7px;line-height:14.7px;color:#212529;">R01</div>
<div class="t" style="left:543.57px;width:140px;text-align:center;top:418.76px;font-size:14.7px;line-height:14.7px;color:#212529;letter-spacing:0.35px;">R01-L01</div>
<div class="t" style="left:712.53px;width:140px;text-align:center;top:418.76px;font-size:14.7px;line-height:14.7px;color:#212529;letter-spacing:0.65px;">011001</div>
<div class="t" style="left:1434.20px;width:140px;text-align:center;top:418.76px;font-size:14.7px;line-height:14.7px;color:#212529;letter-spacing:0px;">1</div>
<div class="b" style="left:886.2px;top:419.40px;width:112px;height:24.5px;box-sizing:border-box;border:1px solid #c4c8cc;border-radius:3px;background:#fff;"></div>
<div class="t" style="left:892.00px;top:424.56px;font-size:14.7px;line-height:14.7px;color:#212529;">SDR</div>
<svg class="b" style="left:980.7px;top:427.00px" width="13" height="9"><path d="M1.8 1.8 L6.5 6.6 L11.2 1.8" fill="none" stroke="#111" stroke-width="2.1"/></svg>
<div class="b" style="left:1066.3px;top:419.40px;width:112.5px;height:24.5px;box-sizing:border-box;border:1px solid #c4c8cc;border-radius:3px;background:#fff;"></div>
<div class="t" style="left:1072.10px;top:424.56px;font-size:14.7px;line-height:14.7px;color:#212529;">P1</div>
<svg class="b" style="left:1160.8px;top:427.00px" width="13" height="9"><path d="M1.8 1.8 L6.5 6.6 L11.2 1.8" fill="none" stroke="#111" stroke-width="2.1"/></svg>
<div class="b" style="left:1308.4px;top:419.00px;width:61.3px;height:26px;box-sizing:border-box;border:1px solid #cacbcd;border-radius:2px;background:#f6f6f6;"></div>
<div class="t" style="left:1312.40px;top:425.10px;font-size:14.3px;line-height:14.3px;color:#6a6a6a;">LC1</div>
<div class="b" style="left:0px;top:454px;width:1667px;height:1px;background:#dee2e6;"></div>
<div class="b" style="left:9.7px;top:464.00px;width:15px;height:15px;background:#4a5058;border-radius:2.5px;"></div>
<svg class="b" style="left:9.7px;top:464.00px" width="15" height="15"><path d="M2.6 8.0 L6.0 11.2 L12.4 3.6" fill="none" stroke="#fff" stroke-width="2.2"/></svg>
<svg class="b" style="left:102.2px;top:464.00px" width="15" height="15"><circle cx="7.5" cy="7.5" r="7.4" fill="#ff0000"/><path d="M4.5 4.5 L10.5 10.5 M10.5 4.5 L4.5 10.5" stroke="#fff" stroke-width="2.3"/></svg>
<div class="t" style="left:232.80px;top:463.76px;font-size:14.7px;line-height:14.7px;color:#212529;">ZONE1</div>
<div class="t" style="left:351.20px;top:463.76px;font-size:14.7px;line-height:14.7px;color:#212529;">R01</div>
<div class="t" style="left:543.57px;width:140px;text-align:center;top:463.76px;font-size:14.7px;line-height:14.7px;color:#212529;letter-spacing:0.35px;">R01-L02</div>
<div class="t" style="left:712.53px;width:140px;text-align:center;top:463.76px;font-size:14.7px;line-height:14.7px;color:#212529;letter-spacing:0.65px;">010102</div>
<div class="t" style="left:1434.20px;width:140px;text-align:center;top:463.76px;font-size:14.7px;line-height:14.7px;color:#212529;letter-spacing:0px;">1</div>
<div class="b" style="left:886.2px;top:464.40px;width:112px;height:24.5px;box-sizing:border-box;border:1px solid #c4c8cc;border-radius:3px;background:#fff;"></div>
<div class="t" style="left:892.00px;top:469.56px;font-size:14.7px;line-height:14.7px;color:#212529;">SDR</div>
<svg class="b" style="left:980.7px;top:472.00px" width="13" height="9"><path d="M1.8 1.8 L6.5 6.6 L11.2 1.8" fill="none" stroke="#111" stroke-width="2.1"/></svg>
<div class="b" style="left:1066.3px;top:464.40px;width:112.5px;height:24.5px;box-sizing:border-box;border:1px solid #c4c8cc;border-radius:3px;background:#fff;"></div>
<div class="t" style="left:1072.10px;top:469.56px;font-size:14.7px;line-height:14.7px;color:#212529;">P1</div>
<svg class="b" style="left:1160.8px;top:472.00px" width="13" height="9"><path d="M1.8 1.8 L6.5 6.6 L11.2 1.8" fill="none" stroke="#111" stroke-width="2.1"/></svg>
<div class="b" style="left:1308.4px;top:464.00px;width:61.3px;height:26px;box-sizing:border-box;border:1px solid #cacbcd;border-radius:2px;background:#f6f6f6;"></div>
<div class="t" style="left:1312.40px;top:470.10px;font-size:14.3px;line-height:14.3px;color:#6a6a6a;">LC1</div>
</div>
<svg class="b" style="left:1818px;top:347px" width="19" height="481" viewBox="0 0 19 481"><path d="M3.5 15.5 L9.5 6.5 L15.5 15.5 Z" fill="#8a8a8a" stroke="#8a8a8a" stroke-width="1.5" stroke-linejoin="round"/>
<rect x="4" y="23" width="11" height="20.7" rx="5.5" fill="#8a8a8a"/>
<path d="M3.5 466.5 L9.5 475.5 L15.5 466.5 Z" fill="#8a8a8a" stroke="#8a8a8a" stroke-width="1.5" stroke-linejoin="round"/></svg>
<div class="b" style="left:151px;top:828px;width:1667px;height:19px;background:#fafafa;"></div>
<svg class="b" style="left:151px;top:828px" width="1667" height="19" viewBox="0 0 1667 19"><path d="M15.5 4.5 L6.5 10 L15.5 15.5 Z" fill="#8a8a8a" stroke="#8a8a8a" stroke-width="1.5" stroke-linejoin="round"/>
<rect x="23" y="4" width="683" height="11" rx="5.5" fill="#8a8a8a"/>
<path d="M1652.5 4.5 L1660.5 10 L1652.5 15.5 Z" fill="#8a8a8a" stroke="#8a8a8a" stroke-width="1.5" stroke-linejoin="round"/></svg>
<div class="t" style="left:151.40px;top:859.34px;font-size:15.9px;line-height:15.9px;color:#6c757d;font-weight:400;">Showing 1 to 811 of 811 entries</div>
<svg class="b" style="left:26px;top:83px" width="22" height="23" viewBox="0 0 22 23"><g fill="#1e90ff"><path d="M10.1 1.3 Q11 0.4 11.9 1.3 L12.9 7.6 H9.1 Z"/><path d="M6.2 7.3 H15.8 L11 12.3 Z" stroke="#1e90ff" stroke-width="0.6" stroke-linejoin="round"/>
<path d="M1.4 13.8 L3.4 10.1 H6.6 L5.0 13.8 Z"/><path d="M20.6 13.8 L18.6 10.1 H15.4 L17.0 13.8 Z"/>
<path d="M1.4 13.4 H20.6 V20.0 Q20.6 21.3 19.3 21.3 H2.7 Q1.4 21.3 1.4 20.0 Z"/></g><rect x="6.6" y="16.7" width="8.9" height="2.2" rx="0.6" fill="#dcdcdc"/></svg>
<svg class="b" style="left:62px;top:87px" width="14" height="16" viewBox="0 0 14 16"><path d="M4.3 3.399999999999997 L9.3 8.299999999999997 L4.3 13.199999999999998" fill="none" stroke="#6a7390" stroke-width="3" stroke-linecap="round" stroke-linejoin="round"/></svg>
<svg class="b" style="left:26px;top:151px" width="22" height="23" viewBox="0 0 22 23"><g fill="#1e90ff"><path d="M6.2 7.2 L11 1.5 L15.8 7.2 Z" stroke="#1e90ff" stroke-width="0.6" stroke-linejoin="round"/><path d="M9.1 7.0 H12.9 L11.6 12.4 Q11 13.1 10.4 12.4 Z"/>
<path d="M1.4 14.2 L3.4 10.4 H6.6 L5.0 14.2 Z"/><path d="M20.6 14.2 L18.6 10.4 H15.4 L17.0 14.2 Z"/>
<path d="M1.4 13.8 H20.6 V20.6 Q20.6 21.9 19.3 21.9 H2.7 Q1.4 21.9 1.4 20.6 Z"/></g><rect x="6.6" y="17.6" width="8.9" height="2.0" rx="0.6" fill="#dcdcdc"/></svg>
<svg class="b" style="left:62px;top:154px" width="14" height="16" viewBox="0 0 14 16"><path d="M4.3 3.900000000000011 L9.3 8.800000000000011 L4.3 13.700000000000012" fill="none" stroke="#6a7390" stroke-width="3" stroke-linecap="round" stroke-linejoin="round"/></svg>
<svg class="b" style="left:24px;top:220px" width="26" height="19" viewBox="0 0 26 19"><g fill="#1e90ff"><rect x="1" y="1.5" width="14.5" height="13"/><path d="M16 4.5 H21 Q23 4.5 24.5 7.5 L25 10 V14.5 H16 Z"/><rect x="1" y="13" width="24" height="2.5"/>
<circle cx="5" cy="16" r="2.6"/><circle cx="20" cy="16" r="2.6"/></g><path d="M18 6.5 H21 L22.5 9.5 H18 Z" fill="#dcdcdc"/><circle cx="5" cy="16" r="1" fill="#dcdcdc"/><circle cx="20" cy="16" r="1" fill="#dcdcdc"/></svg>
<svg class="b" style="left:62px;top:222px" width="14" height="16" viewBox="0 0 14 16"><path d="M4.3 3.5000000000000053 L9.3 8.400000000000006 L4.3 13.300000000000006" fill="none" stroke="#6a7390" stroke-width="3" stroke-linecap="round" stroke-linejoin="round"/></svg>
<svg class="b" style="left:24px;top:285px" width="26" height="26" viewBox="0 0 26 26"><g fill="#1e90ff"><path d="M0.8 1.2 H4.6 L5.4 3.5 H25 V12 L23.3 13 H7.6 L8 15 H23.5 V16.8 H6.4 L3.4 3.5 H0.8 Z"/>
<circle cx="10" cy="21.5" r="2.6"/><circle cx="19" cy="21.5" r="2.6"/></g></svg>
<svg class="b" style="left:62px;top:289px" width="14" height="16" viewBox="0 0 14 16"><path d="M4.3 3.5999999999999996 L9.3 8.5 L4.3 13.4" fill="none" stroke="#6a7390" stroke-width="3" stroke-linecap="round" stroke-linejoin="round"/></svg>
<svg class="b" style="left:24px;top:352px" width="26" height="26" viewBox="0 0 26 26"><path d="M1 6.6 L11.8 1.2 Q13 0.6 14.2 1.2 L25 6.6 V9.6 Q25 10.2 24.2 10.2 H23.8 V23.5 Q23.8 24.8 22.5 24.8 H20.8 V13.5 H5.2 V24.8 H3.5 Q2.2 24.8 2.2 23.5 V10.2 H1.8 Q1 10.2 1 9.6 Z" fill="#2a9cf5"/>
<g fill="#dcdcdc"><rect x="5.3" y="8" width="3.8" height="2.2"/><rect x="11.1" y="8" width="3.8" height="2.2"/><rect x="16.9" y="8" width="3.8" height="2.2"/></g>
<rect x="5.2" y="13.5" width="15.6" height="11.3" fill="#d3e0ec"/><rect x="8.5" y="14.6" width="9" height="4.6" fill="#b3d3f0"/><rect x="11.2" y="19" width="3.6" height="5.8" fill="#c0daf2"/>
<g fill="#2a9cf5"><rect x="6" y="20" width="4.2" height="4.8"/><rect x="16" y="20" width="4.2" height="4.8"/></g></svg>
<svg class="b" style="left:62px;top:357px" width="14" height="16" viewBox="0 0 14 16"><path d="M4.3 3.0999999999999996 L9.3 8 L4.3 12.9" fill="none" stroke="#6a7390" stroke-width="3" stroke-linecap="round" stroke-linejoin="round"/></svg>
<svg class="b" style="left:24px;top:420px" width="26" height="26" viewBox="0 0 26 26"><g fill="#1e90ff"><circle cx="13" cy="12.8" r="9"/><rect x="11.1" y="1.0" width="3.8" height="5" transform="rotate(0 13 12.8)"/><rect x="11.1" y="1.0" width="3.8" height="5" transform="rotate(45 13 12.8)"/><rect x="11.1" y="1.0" width="3.8" height="5" transform="rotate(90 13 12.8)"/><rect x="11.1" y="1.0" width="3.8" height="5" transform="rotate(135 13 12.8)"/><rect x="11.1" y="1.0" width="3.8" height="5" transform="rotate(180 13 12.8)"/><rect x="11.1" y="1.0" width="3.8" height="5" transform="rotate(225 13 12.8)"/><rect x="11.1" y="1.0" width="3.8" height="5" transform="rotate(270 13 12.8)"/><rect x="11.1" y="1.0" width="3.8" height="5" transform="rotate(315 13 12.8)"/></g>
<circle cx="13" cy="12.8" r="6.7" fill="#cfe2f6"/><circle cx="13" cy="12.8" r="5.4" fill="none" stroke="#7dbbff" stroke-width="1.1"/>
<g fill="none" stroke="#1e90ff" stroke-width="1.2" stroke-linecap="round"><path d="M11.6 9.6 A3.4 3.4 0 0 0 12.2 16.1"/><path d="M14.4 16.0 A3.4 3.4 0 0 0 13.8 9.5"/></g>
<g fill="#1e90ff"><circle cx="12.3" cy="9.7" r="1.1"/><circle cx="13.7" cy="15.9" r="1.1"/></g></svg>
<svg class="b" style="left:62px;top:424px" width="14" height="16" viewBox="0 0 14 16"><path d="M4.3 3.7000000000000224 L9.3 8.600000000000023 L4.3 13.500000000000023" fill="none" stroke="#6a7390" stroke-width="3" stroke-linecap="round" stroke-linejoin="round"/></svg>
<svg class="b" style="left:25px;top:491px" width="24" height="18" viewBox="0 0 24 18"><rect x="0.3" y="0.6" width="23.2" height="16.6" rx="1.5" fill="#1e90ff"/><path d="M2.5 3 L12 9.5 L21.5 3 M2.5 14.5 L9.5 9 M21.5 14.5 L14.5 9" fill="none" stroke="#cfe6ff" stroke-width="0.8"/></svg>
<svg class="b" style="left:62px;top:492px" width="14" height="16" viewBox="0 0 14 16"><path d="M4.3 3.499999999999977 L9.3 8.399999999999977 L4.3 13.299999999999978" fill="none" stroke="#6a7390" stroke-width="3" stroke-linecap="round" stroke-linejoin="round"/></svg>
<svg class="b" style="left:27px;top:555px" width="20" height="26" viewBox="0 0 20 26"><path d="M0.5 1 H13.9 L19.5 6.6 V24.9 H0.5 Z" fill="#1e90ff"/>
<rect x="3.1" y="8.9" width="13.8" height="16" rx="0.8" fill="#b5dbff"/><rect x="4.3" y="10.1" width="11.4" height="13.6" fill="#8cc6ff"/>
<rect x="5.6" y="11" width="7" height="1.8" fill="#c9e4ff"/><rect x="5.3" y="13.2" width="9.4" height="1.3" fill="#1e90ff"/><rect x="5.6" y="15" width="8" height="4.5" fill="#a9d4ff"/>
<rect x="4.3" y="20.3" width="11.4" height="1.8" rx="0.9" fill="#1e90ff"/>
<rect x="3.6" y="3.2" width="3.6" height="1" fill="#8cc6ff"/><rect x="3.6" y="5.4" width="3.6" height="1.1" fill="#b5dbff"/></svg>
<svg class="b" style="left:62px;top:559px" width="14" height="16" viewBox="0 0 14 16"><path d="M4.3 3.800000000000045 L9.3 8.700000000000045 L4.3 13.600000000000046" fill="none" stroke="#6a7390" stroke-width="3" stroke-linecap="round" stroke-linejoin="round"/></svg>
<svg class="b" style="left:24px;top:622px" width="26" height="26" viewBox="0 0 26 26"><path d="M2.2 1.0 H12.8 Q13.9 1.0 13.9 2.1 V13 H1.2 V2.1 Q1.2 1.0 2.2 1.0 Z" fill="#9ccbff"/>
<path d="M2.6 1.7 H12.6 V12.5" fill="none" stroke="#1e90ff" stroke-width="1.4"/><path d="M1.9 2 V13" fill="none" stroke="#5eaefc" stroke-width="1.5"/>
<rect x="3.2" y="2.6" width="8.6" height="9.5" fill="#c2e0ff"/>
<circle cx="6.9" cy="5.4" r="1.1" fill="#1e90ff"/><path d="M6.9 6 V10.5 L10.5 12.3" fill="none" stroke="#5eaefc" stroke-width="1.3"/>
<path d="M1.2 12.6 H8.5 L15.6 17.2 V21.9 H1.2 Z" fill="#1e90ff"/>
<circle cx="4.8" cy="23" r="2.1" fill="#1e90ff"/><circle cx="16.7" cy="23" r="2.1" fill="#3d9cff"/>
<rect x="15.6" y="3" width="2.6" height="15.5" fill="#6fb6ff"/><rect x="18" y="9.5" width="2" height="1.6" fill="#5eaefc"/>
<rect x="19.1" y="5.3" width="5.8" height="5.6" fill="#1e90ff"/></svg>
<svg class="b" style="left:62px;top:627px" width="14" height="16" viewBox="0 0 14 16"><path d="M4.3 3.399999999999954 L9.3 8.299999999999955 L4.3 13.199999999999955" fill="none" stroke="#6a7390" stroke-width="3" stroke-linecap="round" stroke-linejoin="round"/></svg>
</body></html>
